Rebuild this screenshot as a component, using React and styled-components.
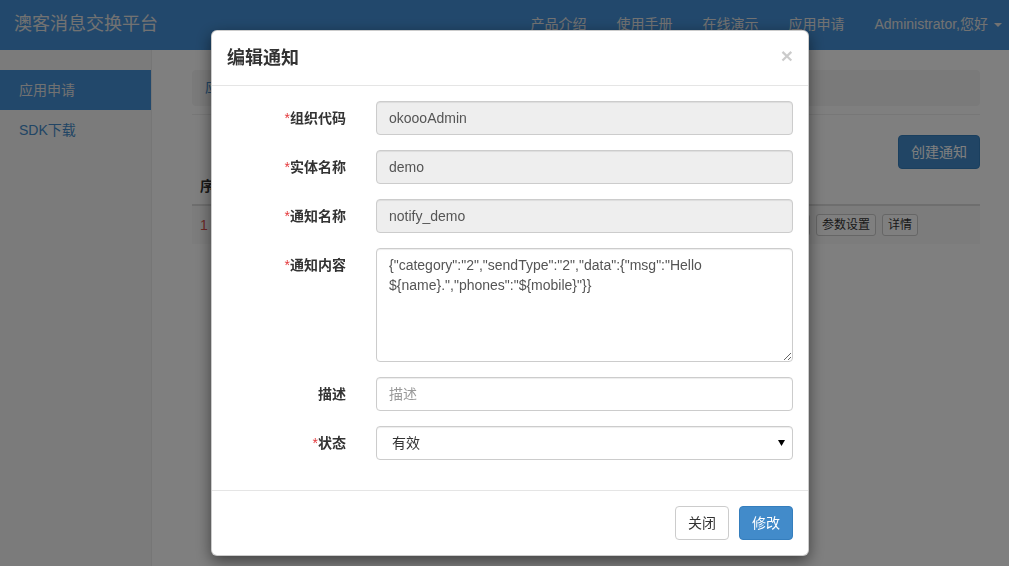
import React from 'react'
import styled, { createGlobalStyle } from 'styled-components'

const GlobalStyle = createGlobalStyle`
	html, body {
		margin: 0;
		padding: 0;
		height: 100%;
		overflow: hidden;
	}
	body {
		font-family: 'Liberation Sans', Arial, 'Noto Sans CJK SC', sans-serif;
		font-size: 14px;
		line-height: 1.42857;
		color: #333;
		background: #fff;
	}
	* {
		box-sizing: border-box;
	}
`

const Page = styled.div`
	height: 566px;
	display: flex;
	flex-direction: column;
`

const Navbar = styled.header`
	height: 50px;
	flex: none;
	background: #4591d8;
	display: flex;
	align-items: center;
	justify-content: space-between;
	padding-left: 14px;
`

const Brand = styled.div`
	font-size: 18px;
	color: #e4e4e4;
`

const NavLinks = styled.nav`
	display: flex;
	height: 100%;
`

const NavLink = styled.a`
	display: flex;
	align-items: center;
	gap: 6px;
	padding: 0 ${(p) => (p.$last ? '7px' : '15px')} 0 15px;
	color: #e4e4e4;
	text-decoration: none;
`

const Caret = styled.span`
	display: inline-block;
	width: 0;
	height: 0;
	border-top: 4px solid #e4e4e4;
	border-left: 4px solid transparent;
	border-right: 4px solid transparent;
`

const Body = styled.div`
	flex: 1;
	display: flex;
`

const Sidebar = styled.aside`
	width: 152px;
	flex: none;
	background: #f6f6f6;
	border-right: 1px solid #ececec;
	padding-top: 20px;
`

const SideItem = styled.a`
	display: block;
	height: 40px;
	line-height: 40px;
	padding-left: 19px;
	text-decoration: none;
	color: ${(p) => (p.$active ? '#e4e4e4' : '#428bca')};
	background: ${(p) => (p.$active ? '#4590d6' : 'transparent')};
`

const Main = styled.main`
	flex: 1;
	padding: 20px 29px 0 40px;
`

const Breadcrumb = styled.div`
	height: 36px;
	padding: 8px 13px;
	background: #f5f5f5;
	border-radius: 4px;
	color: #428bca;
	margin-bottom: 8px;
`

const Rule = styled.div`
	height: 1px;
	background: #eee;
`

const Toolbar = styled.div`
	display: flex;
	justify-content: flex-end;
	padding-top: 20px;
`

const Button = styled.button`
	font-family: inherit;
	font-size: ${(p) => (p.$small ? '12px' : '14px')};
	line-height: ${(p) => (p.$small ? '18px' : '20px')};
	padding: ${(p) => (p.$small ? '1px 5px' : '6px 12px')};
	border-radius: ${(p) => (p.$small ? '3px' : '4px')};
	border: 1px solid ${(p) => (p.$primary ? '#357ebd' : '#ccc')};
	background: ${(p) => (p.$primary ? '#428bca' : '#fff')};
	color: ${(p) => (p.$primary ? '#fff' : '#333')};
	cursor: pointer;
`

const Table = styled.div`
	margin-top: -1px;
`

const TableRow = styled.div`
	display: grid;
	grid-template-columns: 60px 1fr 1fr 1fr 90px 214px;
	background: ${(p) => (p.$striped ? '#f9f9f9' : 'transparent')};
	border-bottom: ${(p) => (p.$head ? '2px solid #ddd' : 'none')};
	font-weight: ${(p) => (p.$head ? 'bold' : 'normal')};
`

const Cell = styled.div`
	padding: 8px;
	min-height: 36px;
	line-height: 20px;
	color: ${(p) => (p.$red ? '#d9534f' : '#333')};
	display: flex;
	align-items: center;
	gap: 6px;
`

const Backdrop = styled.div`
	position: fixed;
	inset: 0;
	background: rgba(0, 0, 0, 0.5);
`

const Modal = styled.div`
	position: fixed;
	top: 30px;
	left: 211px;
	width: 598px;
	background: #fff;
	border: 1px solid rgba(0, 0, 0, 0.2);
	border-radius: 6px;
	box-shadow: 0 5px 15px rgba(0, 0, 0, 0.5);
`

const ModalHeader = styled.div`
	display: flex;
	justify-content: space-between;
	align-items: center;
	padding: 15px;
	border-bottom: 1px solid #e5e5e5;
`

const ModalTitle = styled.h4`
	margin: 0;
	font-size: 18px;
	font-weight: bold;
	line-height: 24px;
	color: #333;
`

const Close = styled.span`
	font-size: 21px;
	font-weight: bold;
	line-height: 1;
	color: #000;
	opacity: 0.2;
	margin-top: -6px;
`

const ModalBody = styled.div`
	padding: 15px;
`

const FormRow = styled.div`
	display: grid;
	grid-template-columns: 119px 1fr;
	column-gap: 30px;
	margin-bottom: 15px;
`

const Label = styled.label`
	text-align: right;
	padding-top: 7px;
	font-weight: bold;
	line-height: 20px;
	color: #333;
`

const Star = styled.span`
	color: #e4393c;
	font-weight: normal;
`

const Input = styled.input`
	display: block;
	width: 100%;
	height: 34px;
	padding: 6px 12px;
	font-family: inherit;
	font-size: 14px;
	line-height: 20px;
	color: #555;
	background: ${(p) => (p.readOnly ? '#eee' : '#fff')};
	border: 1px solid #ccc;
	border-radius: 4px;
	box-shadow: inset 0 1px 1px rgba(0, 0, 0, 0.075);
	outline: none;
	&::placeholder {
		color: #999;
	}
`

const TextArea = styled.textarea`
	display: block;
	width: 100%;
	height: 114px;
	padding: 6px 12px;
	font-family: inherit;
	font-size: 14px;
	line-height: 20px;
	color: #555;
	border: 1px solid #ccc;
	border-radius: 4px;
	box-shadow: inset 0 1px 1px rgba(0, 0, 0, 0.075);
	outline: none;
	resize: both;
`

const SelectWrap = styled.div`
	position: relative;
`

const Select = styled.select`
	display: block;
	width: 100%;
	height: 34px;
	padding: 6px 12px 6px 15px;
	font-family: inherit;
	font-size: 14px;
	color: #333;
	background: #fff;
	border: 1px solid #ccc;
	border-radius: 4px;
	box-shadow: inset 0 1px 1px rgba(0, 0, 0, 0.075);
	appearance: none;
	outline: none;
`

const SelectArrow = styled.svg`
	position: absolute;
	right: 8px;
	top: 14px;
	pointer-events: none;
`

const ModalFooter = styled.div`
	display: flex;
	justify-content: flex-end;
	gap: 10px;
	padding: 15px;
	border-top: 1px solid #e5e5e5;
`

const RequiredLabel = ({ children }) => (
	<Label>
		<Star>*</Star>
		{children}
	</Label>
)

const App = () => {
	const navItems = ['产品介绍', '使用手册', '在线演示', '应用申请']

	return (
		<>
			<GlobalStyle />
			<Page>
				<Navbar>
					<Brand>澳客消息交换平台</Brand>
					<NavLinks>
						{navItems.map((item) => (
							<NavLink key={item}>{item}</NavLink>
						))}
						<NavLink $last>
							Administrator,您好 <Caret />
						</NavLink>
					</NavLinks>
				</Navbar>
				<Body>
					<Sidebar>
						<SideItem $active>应用申请</SideItem>
						<SideItem>SDK下载</SideItem>
					</Sidebar>
					<Main>
						<Breadcrumb>应</Breadcrumb>
						<Rule />
						<Toolbar>
							<Button $primary>创建通知</Button>
						</Toolbar>
						<Table>
							<TableRow $head>
								<Cell>序号</Cell>
								<Cell />
								<Cell />
								<Cell />
								<Cell />
								<Cell />
							</TableRow>
							<TableRow $striped>
								<Cell $red>1</Cell>
								<Cell />
								<Cell />
								<Cell />
								<Cell />
								<Cell>
									<Button $small>编辑</Button>
									<Button $small>参数设置</Button>
									<Button $small>详情</Button>
								</Cell>
							</TableRow>
						</Table>
					</Main>
				</Body>
			</Page>

			<Backdrop />
			<Modal>
				<ModalHeader>
					<ModalTitle>编辑通知</ModalTitle>
					<Close>×</Close>
				</ModalHeader>
				<ModalBody>
					<FormRow>
						<RequiredLabel>组织代码</RequiredLabel>
						<Input readOnly defaultValue='okoooAdmin' />
					</FormRow>
					<FormRow>
						<RequiredLabel>实体名称</RequiredLabel>
						<Input readOnly defaultValue='demo' />
					</FormRow>
					<FormRow>
						<RequiredLabel>通知名称</RequiredLabel>
						<Input readOnly defaultValue='notify_demo' />
					</FormRow>
					<FormRow>
						<RequiredLabel>通知内容</RequiredLabel>
						<TextArea
							rows={5}
							defaultValue={
								'{"category":"2","sendType":"2","data":{"msg":"Hello ${name}.","phones":"${mobile}"}}'
							}
						/>
					</FormRow>
					<FormRow>
						<Label>描述</Label>
						<Input placeholder='描述' />
					</FormRow>
					<FormRow>
						<RequiredLabel>状态</RequiredLabel>
						<SelectWrap>
							<Select defaultValue='1'>
								<option value='1'>有效</option>
								<option value='0'>无效</option>
							</Select>
							<SelectArrow width='7' height='6' viewBox='0 0 7 6'>
								<path d='M0 0 L7 0 L3.5 6 Z' fill='#000' />
							</SelectArrow>
						</SelectWrap>
					</FormRow>
				</ModalBody>
				<ModalFooter>
					<Button>关闭</Button>
					<Button $primary>修改</Button>
				</ModalFooter>
			</Modal>
		</>
	)
}

export default App
